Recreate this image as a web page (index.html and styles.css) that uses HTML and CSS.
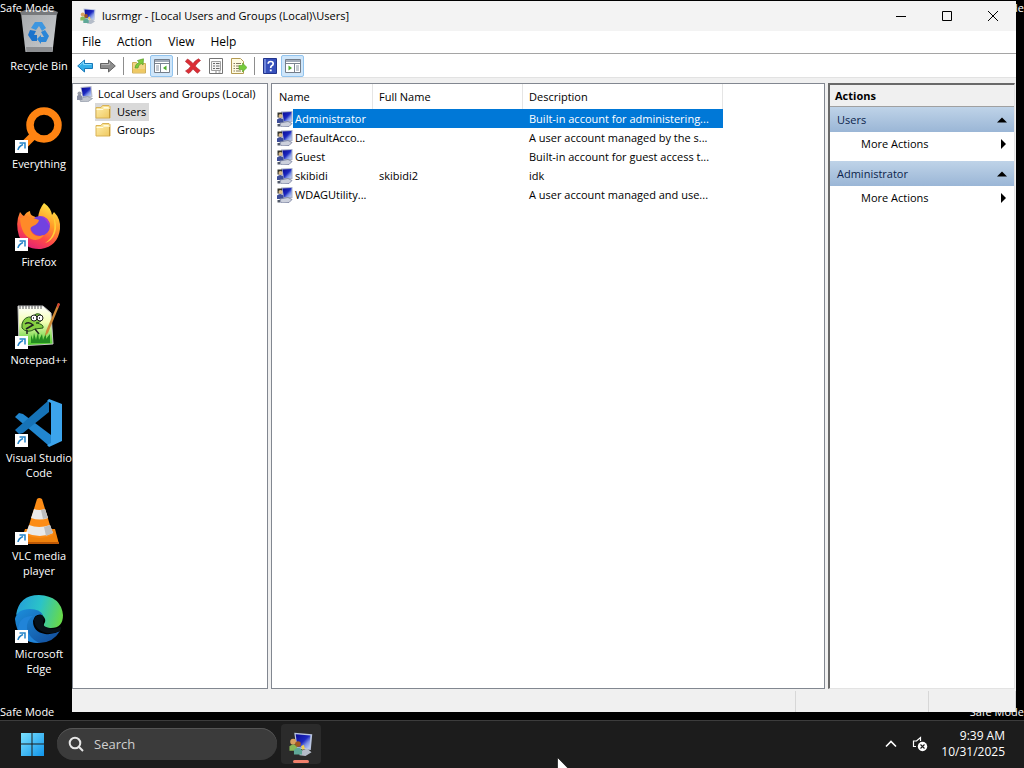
FILE: index.html
```html
<!DOCTYPE html>
<html lang="en">
<head>
  <meta charset="UTF-8">
  <meta name="viewport" content="width=device-width, initial-scale=1.0">
  <title>lusrmgr - [Local Users and Groups (Local)\Users]</title>
  <link rel="stylesheet" href="styles.css">
</head>
<body>

  <!-- Shared icons -->
  <svg class="sprite" width="0" height="0" aria-hidden="true">
    <defs>
      <linearGradient id="screen" x1="0" y1="0" x2="1" y2="1">
        <stop offset="0" stop-color="#0a0a90"/>
        <stop offset="0.5" stop-color="#1c28c0"/>
        <stop offset="0.7" stop-color="#7c90e4"/>
        <stop offset="1" stop-color="#c8d8f8"/>
      </linearGradient>
      <linearGradient id="folder" x1="0" y1="0" x2="1" y2="1">
        <stop offset="0" stop-color="#fff0b0"/>
        <stop offset="1" stop-color="#efc85e"/>
      </linearGradient>
    </defs>
    <symbol id="i-user" viewBox="0 0 16 16">
      <path d="M4 .5L15.500 0v11L6 11.500z" fill="#a8b0c8"/>
      <path d="M5.500 1.500l9-.5v8.800L7 10.300z" fill="url(#screen)"/>
      <path d="M.5 1.500h4.500v5H.5z" fill="#34342c"/>
      <circle cx="3.500" cy="5" r="2" fill="#d8b888"/>
      <path d="M0 12V8.500q3-3 6.500 0V12z" fill="#3c4c98"/>
      <path d="M3 12l8-1.500 4 2-3 3-8 .5z" fill="#ccd0dc" stroke="#747c9c" stroke-width=".8"/>
      <path d="M.5 13h2.500v2.500H.5z" fill="#505868"/>
    </symbol>
    <symbol id="i-root" viewBox="0 0 16 16">
      <path d="M3.500 1L14.500 0l1 11-10 .5z" fill="#b8bccc"/>
      <path d="M4.500 2l9-.8.800 8.500L6 10.300z" fill="url(#screen)"/>
      <path d="M2.500 12.500l8-2 5 2-5 3.500-7-.5z" fill="#c0c4cc" stroke="#8890a0" stroke-width=".7"/>
      <circle cx="2.500" cy="7.500" r="2" fill="#989ca8"/>
      <path d="M0 14v-4q2.500-2.500 5 0l.5 4z" fill="#888ea4"/>
    </symbol>
    <symbol id="i-app" viewBox="0 0 16 16">
      <path d="M3.500 .5L15.500 1.500l-1 10.500L5 11z" fill="#b8c4e0"/>
      <path d="M4.500 1.500l9.800.8-.8 8.700L5.500 10z" fill="url(#screen)"/>
      <path d="M7 13l5-2 3 2.500-4 2.500-4-.5z" fill="#b4bcc8"/>
      <circle cx="2.800" cy="6.500" r="2" fill="#d8a060"/>
      <path d="M.3 12.500V9.500Q3 7.300 5.500 9.500v3z" fill="#88b858"/>
      <circle cx="6" cy="8" r="1.900" fill="#a05820"/>
      <path d="M3.300 15v-3q2.700-3 5.400 0v3z" fill="#5fa898"/>
      <path d="M8 9.500l1.800-1 .8 2.500-1.600 1z" fill="#f0d050"/>
    </symbol>
    <symbol id="i-folder" viewBox="0 0 16 16">
      <path d="M1 3.500h5l1.500-2H14l1 1V14H1z" fill="url(#folder)" stroke="#d9b254"/>
      <path d="M8.500 3.500h5M1.500 5.500H8l1.200-1.300h5.300" fill="none" stroke="#fffbe0"/>
      <path d="M14.500 5v9" stroke="#c59a38"/>
    </symbol>
    <symbol id="i-back" viewBox="0 0 16 16">
      <path d="M7.500 2v3.500h8v5h-8V14L.7 8z" fill="#35aee8" stroke="#1878b8"/>
      <path d="M2.500 7.500l4-3.500v2.500h8" fill="none" stroke="#8adcff"/>
    </symbol>
    <symbol id="i-forward" viewBox="0 0 16 16">
      <path d="M8.500 2v3.500h-8v5h8V14l6.800-6z" fill="#8d8d8d" stroke="#646464"/>
      <path d="M1.500 6.500h8V4.500" fill="none" stroke="#b8b8b8"/>
    </symbol>
    <symbol id="i-up" viewBox="0 0 16 16">
      <path d="M1.500 4.500h4l1 1h8v9.500h-13z" fill="#f2d586" stroke="#cfae58"/>
      <path d="M4 10q0-4 4-5.500L6.500 2.500 12.500.8 12 7l-1.700-1.500Q7 7 7 10z" fill="#7ccc3c" stroke="#5a9c28" stroke-width=".7"/>
      <path d="M2 11h12v3.500H2z" fill="#efc964"/>
    </symbol>
    <!-- Window with the tree on the left -->
    <symbol id="i-tree" viewBox="0 0 16 16">
      <path d="M.5 1.500h15v13H.5z" fill="#fff" stroke="#747d89"/>
      <path d="M1 2h14v2H1z" fill="#a3acb9"/>
      <path d="M1 5.500h14M6.500 6v8.500" stroke="#7b8490"/>
      <path d="M2 8h3M2 10h3M2 12h3" stroke="#8c96a4"/>
      <path d="M12.500 7.500v5L9 10z" fill="#4fae2c"/>
    </symbol>
    <!-- Window with the action pane on the right -->
    <symbol id="i-actions" viewBox="0 0 16 16">
      <path d="M.5 1.500h15v13H.5z" fill="#fff" stroke="#747d89"/>
      <path d="M1 2h14v2H1z" fill="#a3acb9"/>
      <path d="M1 5.500h14M9.500 6v8.500" stroke="#7b8490"/>
      <path d="M11 8h3M11 10h3M11 12h3" stroke="#8c96a4"/>
      <path d="M3.500 7.500v5L7 10z" fill="#4fae2c"/>
    </symbol>
    <symbol id="i-delete" viewBox="0 0 16 16">
      <path d="M2.500 1q3 1.500 5.500 4.500Q10 2.500 13.500.8l2 1.700Q12 5 10.200 8q2.300 2.500 5 4.500l-2.700 2.800Q10 13.500 8 11q-2 3-4.500 4.500L.5 13Q4 11 5.700 8.200 3 5.500.3 3.500z" fill="#dc2d35" stroke="#a9252b" stroke-width=".6"/>
    </symbol>
    <symbol id="i-props" viewBox="0 0 16 16">
      <path d="M1.500.5h13v15h-13z" fill="#fff" stroke="#747474"/>
      <path d="M3.500 3.500h9v9h-9z" fill="#f4f4f4" stroke="#a0a0a0"/>
      <path d="M5 5.500h2M8 5.500h3.500M5 8h2M8 8h3.500M5 10.500h2M8 10.500h3.500" stroke="#686868"/>
      <path d="M7 14h2M10.500 14h2" stroke="#888"/>
    </symbol>
    <symbol id="i-export" viewBox="0 0 16 16">
      <path d="M.5.500h9l3 3v12H.5z" fill="#fffbe0" stroke="#b39a53"/>
      <path d="M2.500 5.500H4M5 5.500h5M2.500 8H4M5 8h3M2.500 10.500H4M5 10.500h3M2.500 13H4M5 13h5" stroke="#857b62"/>
      <path d="M8 7.500h3.500V5L16 9.500 11.500 14v-2.500H8z" fill="#76cb3b" stroke="#55a027" stroke-width=".6"/>
    </symbol>
    <symbol id="i-help" viewBox="0 0 16 16">
      <path d="M1.500.5h13v15h-13z" fill="#3650bc" stroke="#22348c"/>
      <path d="M2 1h2v14H2z" fill="#7087da"/>
      <path d="M6.200 5.800Q6.200 3.500 8.700 3.500t2.500 2.200Q11.200 7 9.600 7.800 8.700 8.400 8.700 10" fill="none" stroke="#fff" stroke-width="1.700"/>
      <path d="M7.800 11.500h1.900v1.800H7.800z" fill="#fff"/>
    </symbol>
    <symbol id="i-shortcut" viewBox="0 0 13 13">
      <path d="M0 0h13v13H0z" fill="#fff"/>
      <path d="M3 10q.5-3.500 5-5.500M4.500 3h5.500v5.500" fill="none" stroke="#2383c8" stroke-width="1.500"/>
    </symbol>
  </svg>

  <main class="desktop">
    <span class="safe-mode top-left">Safe Mode</span>
    <span class="safe-mode top-right">Safe Mode</span>
    <span class="safe-mode bottom-left">Safe Mode</span>
    <span class="safe-mode bottom-right">Safe Mode</span>

    <ul class="shortcuts">
      <li>
        <svg class="shortcut-icon" viewBox="0 0 48 48">
          <defs>
            <linearGradient id="bin" x1="0" y1="0" x2="1" y2="1">
              <stop offset="0" stop-color="#a6a9ac"/>
              <stop offset="1" stop-color="#c9cccf"/>
            </linearGradient>
          </defs>
          <path d="M6 5h36l-4.500 39h-27z" fill="url(#bin)"/>
          <path d="M5 4l5-2h28l5 2-1 3H6z" fill="#77797c"/>
          <path d="M11 39h26.500l-.6 5H11.500z" fill="#8d8f92"/>
          <path d="M20 14h7l4 6-4 3-3-5-3 4-5-2z" fill="#3d96e0"/>
          <path d="M15 22l6 1-2 4h3v6h-5l-4-6z" fill="#1c73cc"/>
          <path d="M30 22l4 6-3 6h-5v2l-4-5 4-4v2h3l-3-5z" fill="#2b86d8"/>
        </svg>
        <span>Recycle Bin</span>
      </li>
      <li>
        <svg class="shortcut-icon" viewBox="0 0 48 48">
          <circle cx="29" cy="19" r="14" fill="none" stroke="#ff8412" stroke-width="7.500"/>
          <path d="M20 28L7 41" stroke="#ff8412" stroke-width="8"/>
          <use href="#i-shortcut" y="34" width="13" height="13"/>
        </svg>
        <span>Everything</span>
      </li>
      <li>
        <svg class="shortcut-icon" viewBox="0 0 48 48">
          <defs>
            <linearGradient id="fox" x1="0.800" y1="0" x2="0.300" y2="1">
              <stop offset="0" stop-color="#fff04a"/>
              <stop offset="0.400" stop-color="#ff9a28"/>
              <stop offset="0.700" stop-color="#ff4a48"/>
              <stop offset="1" stop-color="#e01f76"/>
            </linearGradient>
          </defs>
          <path d="M29 -1q7 5 8 12l2-3q7 7 6 17-2 17-19 20Q10 46 4 32 0 19 5 8q2 3 4 4 2-4 6-5 0 4 3 5l5 2q1-9 6-15z" fill="url(#fox)"/>
          <circle cx="25" cy="22" r="10" fill="#7142e0"/>
          <path d="M25 12q10 1 10 11l-3-5q-2-4-7-6z" fill="#a63bd0"/>
          <path d="M5 14q7-3 13 0l6 2q-1 4-6 6-5 2-1 7 4 5 12 2-5 7-13 4Q6 31 5 14z" fill="#ff8a28"/>
          <path d="M38 12q5 8 2 17-3 8-10 10 13-8 8-27z" fill="#ffd038"/>
          <use href="#i-shortcut" y="34" width="13" height="13"/>
        </svg>
        <span>Firefox</span>
      </li>
      <li>
        <svg class="shortcut-icon" viewBox="0 0 48 48">
          <defs>
            <linearGradient id="note" x1="0" y1="0" x2="0" y2="1">
              <stop offset="0" stop-color="#fff"/>
              <stop offset="0.400" stop-color="#f4ffb4"/>
              <stop offset="1" stop-color="#46c828"/>
            </linearGradient>
          </defs>
          <path d="M3 4h25l8 7 2 31-34 2z" fill="url(#note)" stroke="#c8c8c8"/>
          <path d="M5 3v4M8 3v4M11 3v4M14 3v4M17 3v4M20 3v4M23 3v4M26 3v4" stroke="#555"/>
          <path d="M7 22q2-8 10-7l4-3q5-1 6 3 1 5-6 6 8 1 7 5l-8 1q-8 5-13-1z" fill="#87cf42" stroke="#26581b"/>
          <circle cx="19" cy="16" r="3" fill="#fff" stroke="#222"/>
          <circle cx="25" cy="16" r="3" fill="#fff" stroke="#222"/>
          <path d="M18 16h1M24 16h1M10 22q4-3 8 1l-7 4M12 28v4M20 27l4 5" fill="none" stroke="#222" stroke-width="1.500"/>
          <path d="M16 41V33l2 5 1-7 2 7 2-8 1 8 3-6 1 6 3-7v6l4-5v9z" fill="#238c20"/>
          <path d="M45 2L33 31l-3 3 1-5L43 1z" fill="#cd8a39"/>
          <path d="M45 2l-2-1-1 4 1 1z" fill="#d83c30"/>
          <use href="#i-shortcut" y="34" width="13" height="13"/>
        </svg>
        <span>Notepad++</span>
      </li>
      <li>
        <svg class="shortcut-icon" viewBox="0 0 48 48">
          <path d="M0 17l4-4 4 1 28 21v11l-3-1z" fill="#2186cf"/>
          <path d="M34 0v12L8 33l-4 1-4-4z" fill="#1673b8"/>
          <path d="M34 -1l13 5v37l-13 6-2-2 4-2V3l-4-2z" fill="#3ca4ec"/>
          <use href="#i-shortcut" y="34" width="13" height="13"/>
        </svg>
        <span>Visual Studio Code</span>
      </li>
      <li>
        <svg class="shortcut-icon" viewBox="0 0 48 48">
          <path d="M10 31h30l4 15H5z" fill="#f0820c"/>
          <path d="M22 1q2-2 5 0l11 36q-13 6-27 0z" fill="#fc8c16"/>
          <path d="M19 11q5 2 11 0l3 9q-8 3-17 0zM14 27q10 4 21 0l3 8q-13 6-27 0z" fill="#e9e9e9"/>
          <path d="M30 11l3 9-5 1-2-9zM35 27l3 8-7 3-2-9z" fill="#bebebe"/>
          <path d="M5 44h39v2H5z" fill="#bf5905"/>
          <use href="#i-shortcut" y="34" width="13" height="13"/>
        </svg>
        <span>VLC media player</span>
      </li>
      <li>
        <svg class="shortcut-icon" viewBox="0 0 48 48">
          <defs>
            <linearGradient id="edge-top" x1="0" y1="0.300" x2="1" y2="0.500">
              <stop offset="0" stop-color="#249fd9"/>
              <stop offset="0.500" stop-color="#2bc3c8"/>
              <stop offset="1" stop-color="#67d94b"/>
            </linearGradient>
            <linearGradient id="edge-low" x1="0" y1="0" x2="1" y2="1">
              <stop offset="0" stop-color="#1c8fdc"/>
              <stop offset="1" stop-color="#124a99"/>
            </linearGradient>
          </defs>
          <path d="M1 19Q4-1 24-1q22 1 24 20 0 13-12 13-9 0-7-4 3-4-1-8-4-5-12-5Q6 15 1 19z" fill="url(#edge-top)"/>
          <path d="M0 23q2-10 15-10 10 0 13 6-8-2-10 6 0 11 12 13 8 1 15-3-7 12-21 12Q2 46 0 23z" fill="url(#edge-low)"/>
          <path d="M18 20q-7 4-6 13 2 9 12 14-16 0-21-12 0-15 15-15z" fill="#2184d8"/>
          <path d="M19 24q1-5 8-5 3 3 1 7-1 5 8 6.500 5 1 9-1.500 2 0 0 4-7 3-14 2-11-3-12-13z" fill="#071018"/>
          <use href="#i-shortcut" y="34" width="13" height="13"/>
        </svg>
        <span>Microsoft Edge</span>
      </li>
    </ul>

    <section class="window">
      <header class="titlebar">
        <svg class="icon"><use href="#i-app"/></svg>
        <h1>lusrmgr - [Local Users and Groups (Local)\Users]</h1>
        <div class="window-buttons">
          <button type="button" aria-label="Minimize"><svg viewBox="0 0 12 12"><path d="M1 6.500h10"/></svg></button>
          <button type="button" aria-label="Maximize"><svg viewBox="0 0 12 12"><path d="M1.500 1.500h9v9h-9z"/></svg></button>
          <button type="button" aria-label="Close"><svg viewBox="0 0 12 12"><path d="M1 1l10 10M11 1L1 11"/></svg></button>
        </div>
      </header>

      <nav class="menubar">
        <button type="button">File</button>
        <button type="button">Action</button>
        <button type="button">View</button>
        <button type="button">Help</button>
      </nav>

      <div class="toolbar">
        <button type="button" aria-label="Back"><svg class="icon"><use href="#i-back"/></svg></button>
        <button type="button" aria-label="Forward"><svg class="icon"><use href="#i-forward"/></svg></button>
        <span class="separator"></span>
        <button type="button" aria-label="Up one level"><svg class="icon"><use href="#i-up"/></svg></button>
        <button type="button" class="pressed" aria-label="Show console tree"><svg class="icon"><use href="#i-tree"/></svg></button>
        <span class="separator"></span>
        <button type="button" aria-label="Delete"><svg class="icon"><use href="#i-delete"/></svg></button>
        <button type="button" aria-label="Properties"><svg class="icon"><use href="#i-props"/></svg></button>
        <button type="button" aria-label="Export list"><svg class="icon"><use href="#i-export"/></svg></button>
        <span class="separator"></span>
        <button type="button" aria-label="Help"><svg class="icon"><use href="#i-help"/></svg></button>
        <button type="button" class="pressed" aria-label="Show action pane"><svg class="icon"><use href="#i-actions"/></svg></button>
      </div>

      <div class="panes">
        <div class="pane tree">
          <div class="tree-row"><svg class="icon"><use href="#i-root"/></svg><span>Local Users and Groups (Local)</span></div>
          <ul>
            <li class="tree-row selected"><svg class="icon"><use href="#i-folder"/></svg><span>Users</span></li>
            <li class="tree-row"><svg class="icon"><use href="#i-folder"/></svg><span>Groups</span></li>
          </ul>
        </div>

        <div class="pane list">
          <table>
            <thead>
              <tr><th class="col-name">Name</th><th class="col-full">Full Name</th><th class="col-desc">Description</th></tr>
            </thead>
            <tbody>
              <tr class="selected"><td><div class="name"><svg class="icon"><use href="#i-user"/></svg><span>Administrator</span></div></td><td></td><td>Built-in account for administering...</td></tr>
              <tr><td><div class="name"><svg class="icon"><use href="#i-user"/></svg><span>DefaultAcco...</span></div></td><td></td><td>A user account managed by the s...</td></tr>
              <tr><td><div class="name"><svg class="icon"><use href="#i-user"/></svg><span>Guest</span></div></td><td></td><td>Built-in account for guest access t...</td></tr>
              <tr><td><div class="name"><svg class="icon"><use href="#i-user"/></svg><span>skibidi</span></div></td><td>skibidi2</td><td>idk</td></tr>
              <tr><td><div class="name"><svg class="icon"><use href="#i-user"/></svg><span>WDAGUtility...</span></div></td><td></td><td>A user account managed and use...</td></tr>
            </tbody>
          </table>
        </div>

        <aside class="pane actions">
          <h2>Actions</h2>
          <section>
            <button type="button" class="group">Users<svg class="arrow" viewBox="0 0 10 10"><path d="M0 7.500l5-5 5 5z"/></svg></button>
            <button type="button" class="more">More Actions<svg class="arrow" viewBox="0 0 10 10"><path d="M4 0l5 5-5 5z"/></svg></button>
          </section>
          <section>
            <button type="button" class="group">Administrator<svg class="arrow" viewBox="0 0 10 10"><path d="M0 7.500l5-5 5 5z"/></svg></button>
            <button type="button" class="more">More Actions<svg class="arrow" viewBox="0 0 10 10"><path d="M4 0l5 5-5 5z"/></svg></button>
          </section>
        </aside>
      </div>

      <footer class="statusbar">
        <span class="status-main"></span>
        <span class="status-mid"></span>
        <span class="status-end"></span>
      </footer>
    </section>
  </main>

  <footer class="taskbar">
    <button type="button" class="start" aria-label="Start">
      <svg viewBox="0 0 24 24">
        <defs>
          <linearGradient id="win" x1="0" y1="0" x2="24" y2="24" gradientUnits="userSpaceOnUse">
            <stop offset="0" stop-color="#7fe4ff"/>
            <stop offset="1" stop-color="#1094ea"/>
          </linearGradient>
        </defs>
        <path d="M1 1h10.500v10.500H1zM12.500 1H24v10.500H12.500zM1 12.500h10.500V24H1zM12.500 12.500H24V24H12.500z" fill="url(#win)"/>
      </svg>
    </button>
    <label class="search">
      <svg viewBox="0 0 16 16"><circle cx="7" cy="7" r="5.300"/><path d="M10.800 10.800L15 15"/></svg>
      <input type="text" placeholder="Search" aria-label="Search">
    </label>
    <button type="button" class="task" aria-label="lusrmgr"><svg viewBox="0 0 16 16"><use href="#i-app"/></svg></button>
    <div class="tray">
      <button type="button" aria-label="Show hidden icons"><svg viewBox="0 0 16 16"><path d="M3 10.500l5-5 5 5" fill="none" stroke="#fff" stroke-width="1.600"/></svg></button>
      <button type="button" aria-label="Volume">
        <svg viewBox="0 0 16 16">
          <path d="M8.500 5V1.500L4.500 5H1.500v5.500H4" fill="none" stroke="#fff" stroke-width="1.200"/>
          <circle cx="10.500" cy="10.500" r="4.700" fill="#fff"/>
          <path d="M8.500 8.500l4 4M12.500 8.500l-4 4" stroke="#1c1c1c" stroke-width="1.100"/>
        </svg>
      </button>
      <div class="clock"><span>9:39 AM</span><span>10/31/2025</span></div>
    </div>
  </footer>

  <svg class="cursor" viewBox="0 0 12 19"><path d="M.5 .5v16l3.700-3.600 2.600 5.600 2.500-1.100-2.600-5.500h5z" fill="#fff" stroke="#000" stroke-width=".6"/></svg>

</body>
</html>
```

FILE: styles.css
```css
* {
  box-sizing: border-box;
}

body {
  display: flex;
  flex-direction: column;
  height: 100vh;
  margin: 0;
  overflow: hidden;
  background-color: #000;
  color: #000;
  font-family: "Open Sans", "Noto Sans", sans-serif;
  font-size: 11px;
  line-height: 16px;
}

button {
  display: flex;
  align-items: center;
  padding: 0;
  border: none;
  background: none;
  color: inherit;
  font: inherit;
}

ul {
  margin: 0;
  padding: 0;
  list-style: none;
}

.sprite {
  position: absolute;
}

.icon {
  flex: none;
  width: 16px;
  height: 16px;
}

/* Desktop */
.desktop {
  position: relative;
  flex: 1;
  min-height: 0;
}

.safe-mode {
  position: absolute;
  color: #fff;
}

.top-left {
  top: 0;
  left: 0;
}

.top-right {
  top: 0;
  right: 0;
}

.bottom-left {
  bottom: 0;
  left: 0;
}

.bottom-right {
  right: 0;
  bottom: 0;
}

.shortcuts {
  width: 78px;
  padding-top: 8px;
}

.shortcuts li {
  display: flex;
  flex-direction: column;
  align-items: center;
  gap: 2px;
  height: 98px;
  padding: 0 4px;
  color: #fff;
  line-height: 15px;
  text-align: center;
}

.shortcut-icon {
  flex: none;
  width: 48px;
  height: 48px;
  overflow: visible;
}

/* Window */
.window {
  position: absolute;
  top: 1px;
  right: 8px;
  bottom: 8px;
  left: 72px;
  display: flex;
  flex-direction: column;
  background-color: #f0f0f0;
}

.titlebar {
  display: flex;
  align-items: center;
  height: 30px;
  padding-left: 8px;
  background-color: #f3f3f3;
}

.titlebar h1 {
  flex: 1;
  margin: 0 0 0 6px;
  font-size: 11px;
  font-weight: normal;
}

.window-buttons {
  display: flex;
}

.window-buttons button {
  justify-content: center;
  width: 46px;
  height: 30px;
}

.window-buttons svg {
  width: 12px;
  height: 12px;
  fill: none;
  stroke: #000;
}

.menubar {
  display: flex;
  height: 23px;
  padding-left: 2px;
  border-bottom: 1px solid #a5a5a5;
  background-color: #fff;
  font-size: 12px;
}

.menubar button {
  padding: 0 8px;
}

.toolbar {
  display: flex;
  align-items: center;
  height: 24px;
  padding-left: 1px;
  border-bottom: 1px solid #e2e2e2;
  background-color: #fff;
}

.toolbar button {
  justify-content: center;
  width: 23px;
  height: 22px;
}

.toolbar .pressed {
  border: 1px solid #92c4ee;
  border-radius: 2px;
  background-color: #cfe6fa;
}

.separator {
  width: 1px;
  height: 18px;
  margin: 0 3px 0 4px;
  background-color: #8d8d8d;
}

.panes {
  display: flex;
  flex: 1;
  gap: 3px;
  min-height: 0;
  padding: 5px 1px 0 0;
}

.pane {
  border: 1px solid #828790;
  background-color: #fff;
}

/* Console tree */
.tree {
  width: 196px;
  padding-top: 1px;
  white-space: nowrap;
}

.tree ul {
  padding-left: 22px;
}

.tree-row {
  display: flex;
  align-items: center;
  gap: 5px;
  width: max-content;
  height: 18px;
  padding-left: 4px;
}

.tree li {
  gap: 6px;
  padding: 0 3px 0 0;
}

.tree .selected {
  background-color: #d9d9d9;
}

/* User list */
.list {
  flex: 1;
}

.list table {
  width: 451px;
  table-layout: fixed;
  border-spacing: 0;
}

.col-name {
  width: 101px;
}

.col-full {
  width: 150px;
}

.list th {
  height: 25px;
  padding: 0 0 0 6px;
  border-right: 1px solid #e5e5e5;
  font-weight: normal;
  text-align: left;
}

.list .col-name {
  padding-left: 7px;
}

.list td {
  height: 19px;
  padding: 0 0 0 6px;
  white-space: nowrap;
}

.list td:first-child {
  padding-left: 5px;
}

.name {
  display: flex;
  align-items: center;
}

.name span {
  flex: 1;
  height: 19px;
  padding-left: 2px;
  line-height: 19px;
}

.list .selected td {
  background-color: #0078d7;
  color: #fff;
}

.list .selected td:first-child {
  background: none;
}

.selected .name span {
  background-color: #0078d7;
}

/* Actions pane */
.actions {
  width: 187px;
  border-color: #696969 #e3e3e3 #e3e3e3 #696969;
  border-width: 2px 1px 1px 2px;
}

.actions h2 {
  height: 22px;
  margin: 0;
  padding-left: 5px;
  border-bottom: 1px solid #a0a0a0;
  background-color: #f0f0f0;
  font-size: 11px;
  line-height: 22px;
}

.actions section {
  margin-bottom: 5px;
}

.actions button {
  justify-content: space-between;
  width: 100%;
  padding-right: 7px;
}

.actions .group {
  height: 25px;
  padding-left: 7px;
  background: linear-gradient(#bfd3e8, #9ab6d6);
  color: #0b1f4b;
}

.actions .more {
  height: 24px;
  padding-left: 31px;
}

.arrow {
  width: 10px;
  height: 10px;
  fill: #000;
}

/* Status bar */
.statusbar {
  display: flex;
  height: 23px;
  padding-top: 2px;
}

.statusbar span {
  border-right: 1px solid #d7d7d7;
}

.status-main {
  flex: 1;
}

.status-mid {
  width: 133px;
}

.status-end {
  width: 87px;
}

/* Taskbar */
.taskbar {
  display: flex;
  align-items: center;
  height: 48px;
  padding: 0 19px 0 20px;
  background-color: #1c1c1c;
  box-shadow: inset 0 1px #3c3c3c;
  color: #fff;
  font-size: 12px;
}

.start svg {
  width: 24px;
  height: 24px;
}

.search {
  display: flex;
  align-items: center;
  gap: 10px;
  width: 220px;
  height: 32px;
  margin: 0 4px 0 13px;
  padding: 0 11px;
  border-radius: 16px;
  background-color: #3b3b3b;
  box-shadow: inset 0 1px #555;
}

.search svg {
  flex: none;
  width: 16px;
  height: 16px;
  fill: none;
  stroke: #e6e6e6;
  stroke-width: 2;
}

.search input {
  width: 100%;
  padding: 0;
  border: none;
  outline: none;
  background: none;
  color: #fff;
  font: inherit;
  font-size: 13px;
}

.search input::placeholder {
  color: #d0d0d0;
}

.task {
  position: relative;
  justify-content: center;
  width: 40px;
  height: 40px;
  border-radius: 4px;
  background-color: #2b2b2b;
}

.task svg {
  width: 24px;
  height: 24px;
}

.task::after {
  position: absolute;
  bottom: 1px;
  width: 16px;
  height: 3px;
  border-radius: 2px;
  background-color: #f0806c;
  content: "";
}

.tray {
  display: flex;
  align-items: center;
  gap: 13px;
  margin-left: auto;
}

.tray svg {
  width: 16px;
  height: 16px;
}

.clock {
  display: flex;
  flex-direction: column;
  text-align: right;
}

.cursor {
  position: absolute;
  top: 757px;
  left: 557px;
  width: 12px;
  height: 19px;
}
```
